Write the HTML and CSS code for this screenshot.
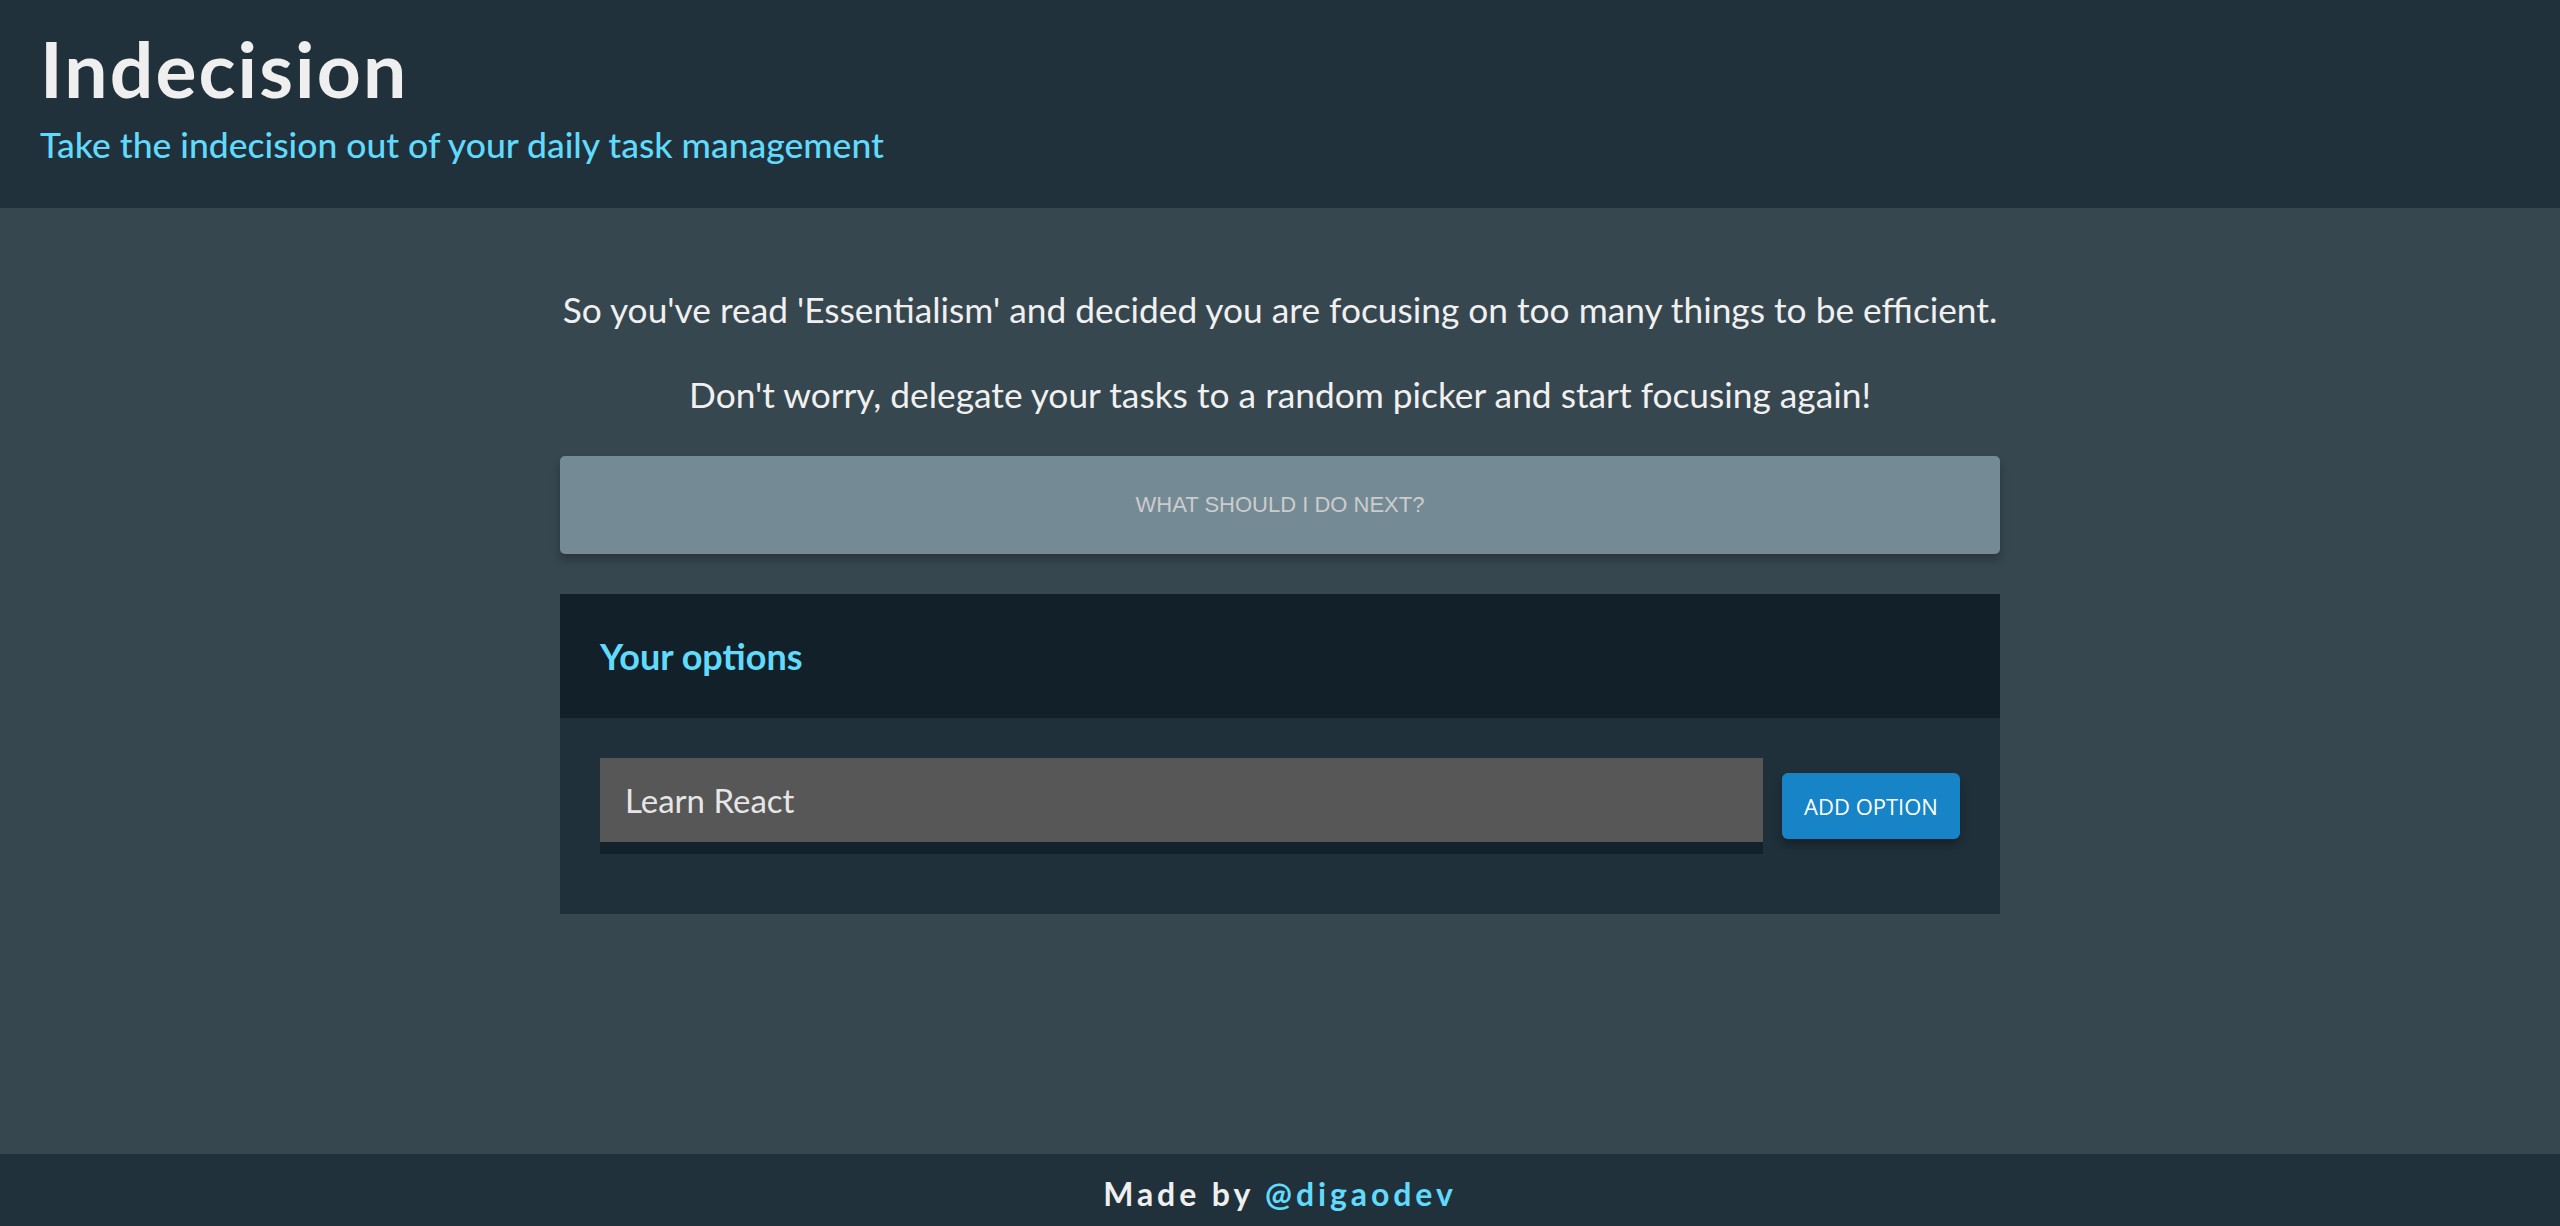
FILE: index.html
```html
<!DOCTYPE html>
<html lang="en">
<head>
<meta charset="utf-8">
<title>Indecision</title>
<link rel="stylesheet" href="styles.css">
</head>
<body>
<header class="header">
  <h1 class="header__title">Indecision</h1>
  <h2 class="header__subtitle">Take the indecision out of your daily task management</h2>
</header>
<main class="main">
  <div class="container">
    <p class="intro">So you've read 'Essentialism' and decided you are focusing on too many things to be efficient.</p>
    <p class="intro intro--second">Don't worry, delegate your tasks to a random picker and start focusing again!</p>
    <button class="big-button" disabled>WHAT SHOULD I DO NEXT?</button>
    <section class="widget">
      <div class="widget__header">
        <h3 class="widget__title">Your options</h3>
      </div>
      <form class="add-option">
        <input class="add-option__input" type="text" value="Learn React">
        <button class="button" type="button">ADD OPTION</button>
      </form>
    </section>
  </div>
</main>
<footer class="footer">
  <p class="footer__text">Made by <span class="footer__link">@digaodev</span></p>
</footer>
</body>
</html>
```
FILE: styles.css
```css
* { box-sizing: border-box; }
html, body { margin: 0; padding: 0; }
body {
  font-family: Lato, "Open Sans", sans-serif;
  background: #37474f;
  color: #f0f0f0;
  min-height: 100vh;
  display: flex;
  flex-direction: column;
  overflow: hidden;
}
.header {
  background: #20313b;
  height: 208px;
  padding: 30px 0 0 40px;
}
.header__title {
  margin: 0;
  font-size: 76.8px;
  line-height: 1;
  font-weight: 700;
  letter-spacing: 2.1px;
  color: #efefef;
}
.header__subtitle {
  margin: 20px 0 0 0;
  font-size: 35.5px;
  line-height: 1;
  font-weight: 500;
  color: #61dafb;
}
.main {
  flex: 1;
}
.container {
  width: 1440px;
  margin: 0 auto;
  padding-top: 84px;
}
.intro {
  margin: 0;
  font-size: 35.3px;
  line-height: 1;
  text-align: center;
  white-space: nowrap;
  color: #f0f0f0;
}
.intro--second {
  margin-top: 50px;
}
.big-button {
  display: block;
  width: 100%;
  height: 98px;
  margin-top: 43px;
  background: #748a95;
  border: none;
  border-radius: 5px;
  box-shadow: 0 6px 8px rgba(0, 0, 0, 0.25);
  color: #cccccc;
  font-family: "Liberation Sans", Arial, sans-serif;
  font-size: 22px;
  padding: 0;
}
.widget {
  margin-top: 40px;
  background: #1f303a;
}
.widget__header {
  height: 124px;
  background: #112029;
  display: flex;
  align-items: center;
  padding-left: 40px;
}
.widget__title {
  margin: 0;
  font-size: 36px;
  line-height: 1;
  font-weight: 700;
  color: #61dafb;
}
.add-option {
  display: flex;
  align-items: center;
  gap: 19px;
  padding: 40px 40px 60px 40px;
}
.add-option__input {
  flex: 1;
  height: 96px;
  background: #575757;
  border: none;
  border-bottom: 12px solid #13212a;
  padding: 0 0 0 25px;
  font-family: Lato, sans-serif;
  font-size: 33px;
  color: #e6e6e6;
  outline: none;
}
.button {
  width: 178px;
  height: 66px;
  background: #1784c8;
  border: none;
  border-radius: 6px;
  box-shadow: 0 6px 10px rgba(0, 0, 0, 0.3);
  color: #ffffff;
  font-family: "Open Sans", sans-serif;
  font-size: 22px;
  font-weight: 500;
  padding: 0;
}
.footer {
  background: #20313b;
  height: 72px;
  padding-top: 24px;
}
.footer__text {
  margin: 0;
  text-align: center;
  font-size: 32px;
  line-height: 1;
  font-weight: 700;
  letter-spacing: 3.9px;
  color: #efefef;
}
.footer__link {
  color: #61dafb;
}
```
